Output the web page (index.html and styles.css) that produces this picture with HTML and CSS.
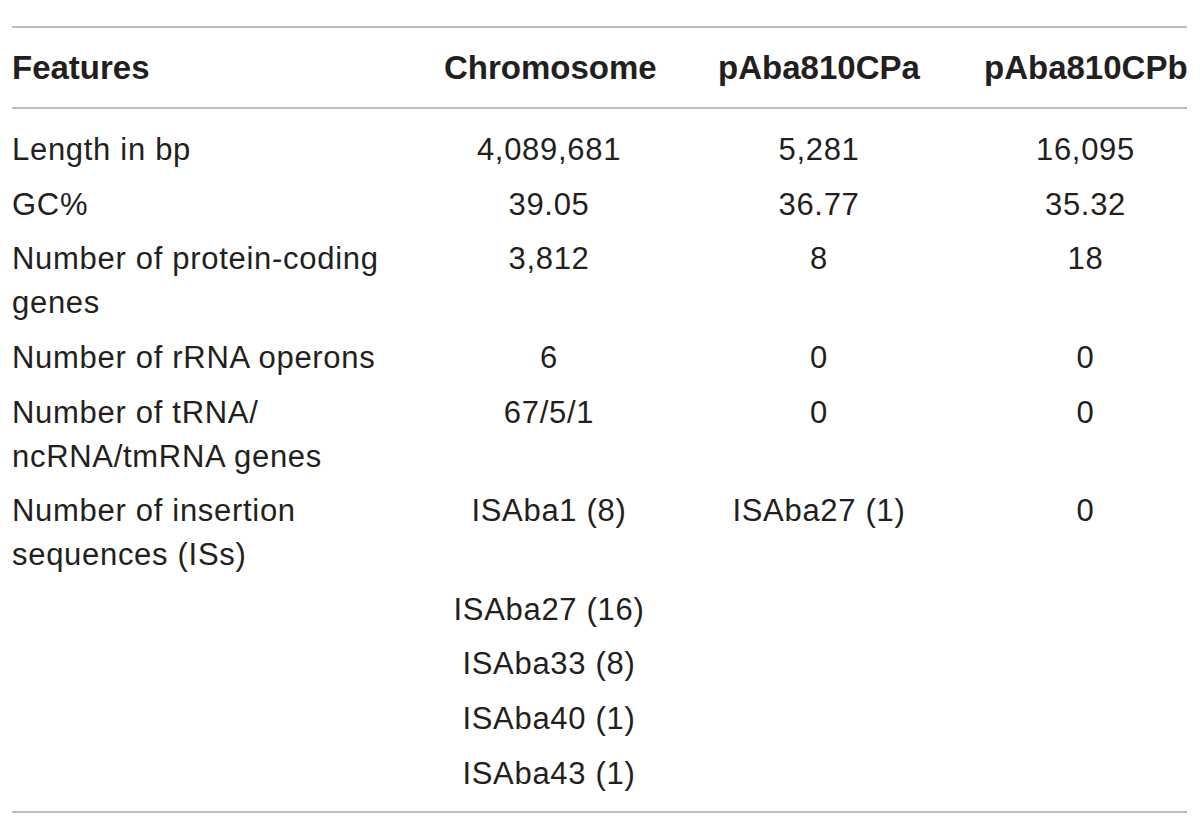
FILE: index.html
```html
<!DOCTYPE html>
<html>
<head>
<meta charset="utf-8">
<link rel="stylesheet" href="styles.css">
</head>
<body>
<div class="table">
  <div class="row head">
    <div class="c first">Features</div>
    <div class="c">Chromosome</div>
    <div class="c">pAba810CPa</div>
    <div class="c">pAba810CPb</div>
  </div>
  <div class="body">
    <div class="row">
      <div class="c first">Length in bp</div>
      <div class="c">4,089,681</div>
      <div class="c">5,281</div>
      <div class="c">16,095</div>
    </div>
    <div class="row">
      <div class="c first">GC%</div>
      <div class="c">39.05</div>
      <div class="c">36.77</div>
      <div class="c">35.32</div>
    </div>
    <div class="row">
      <div class="c first">Number of protein-coding<br>genes</div>
      <div class="c">3,812</div>
      <div class="c">8</div>
      <div class="c">18</div>
    </div>
    <div class="row">
      <div class="c first">Number of rRNA operons</div>
      <div class="c">6</div>
      <div class="c">0</div>
      <div class="c">0</div>
    </div>
    <div class="row">
      <div class="c first">Number of tRNA/<br>ncRNA/tmRNA genes</div>
      <div class="c">67/5/1</div>
      <div class="c">0</div>
      <div class="c">0</div>
    </div>
    <div class="row">
      <div class="c first">Number of insertion<br>sequences (ISs)</div>
      <div class="c">ISAba1 (8)</div>
      <div class="c">ISAba27 (1)</div>
      <div class="c">0</div>
    </div>
    <div class="row">
      <div class="c first"></div>
      <div class="c">ISAba27 (16)</div>
      <div class="c"></div>
      <div class="c"></div>
    </div>
    <div class="row">
      <div class="c first"></div>
      <div class="c">ISAba33 (8)</div>
      <div class="c"></div>
      <div class="c"></div>
    </div>
    <div class="row">
      <div class="c first"></div>
      <div class="c">ISAba40 (1)</div>
      <div class="c"></div>
      <div class="c"></div>
    </div>
    <div class="row">
      <div class="c first"></div>
      <div class="c">ISAba43 (1)</div>
      <div class="c"></div>
      <div class="c"></div>
    </div>
  </div>
</div>
</body>
</html>
```
FILE: styles.css
```css
html, body {
  margin: 0;
  padding: 0;
  background: #ffffff;
}
body {
  font-family: "Liberation Sans", Arial, sans-serif;
  color: #231f20;
  padding-top: 26px;
  padding-left: 12px;
}
.table {
  width: 1175px;
  border-top: 2px solid #bdbdbd;
  border-bottom: 2px solid #bdbdbd;
}
.row {
  display: grid;
  grid-template-columns: 432px 210px 330px 203px;
}
.c {
  text-align: center;
  white-space: nowrap;
}
.c.first {
  text-align: left;
}
.head {
  border-bottom: 2px solid #bdbdbd;
  padding: 18px 0 17px;
}
.head .c {
  font-weight: bold;
  font-size: 33px;
  line-height: 44px;
}
.body {
  padding: 14px 0 10px;
}
.body .row {
  padding: 5.3px 0;
}
.body .c {
  font-size: 31px;
  line-height: 44px;
  letter-spacing: 0.7px;
}
```
